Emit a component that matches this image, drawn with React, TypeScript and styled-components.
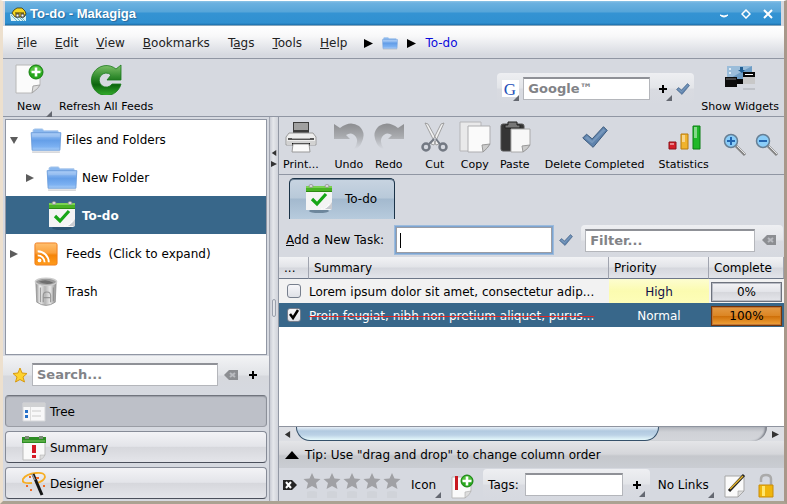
import React, { useState } from "react";
import styled, { createGlobalStyle, css } from "styled-components";

const Global = createGlobalStyle`
  * { box-sizing: border-box; }
  html, body { margin: 0; }
  body { font-family: "DejaVu Sans", sans-serif; font-size: 12px; line-height: 16px; color: #000; }
  button, input { font: inherit; color: inherit; }
  button { border: 0; padding: 0; margin: 0; background: none; }
  svg { display: block; flex: none; }
`;

const metal = "linear-gradient(#f3f3f6 0%, #e3e4e9 48%, #d6d7dc 50%, #e4e5ea 100%)";

/* ---------- window ---------- */
const Window = styled.div`
  display: flex; flex-direction: column; min-height: 100vh;
  background: #d6d9e0; border-top: 1px solid #fff;
  border-left: 3px solid #ede0ce; border-right: 3px solid #a8988a; border-bottom: 3px solid #aaa292;
`;
const TitleBar = styled.header`
  display: flex; align-items: center; height: 25px; padding: 0 2px 0 5px; margin: 0 3px 0 2px;
  background: linear-gradient(#8cc4e6 0, #6bb1e0 2px, #56a5d9 11px, #3493d3 12px, #3090d0 22px, #1d6fab 24px, #f0ddcc 25px);
  color: #fff;
`;
const Title = styled.h1`
  flex: 1; margin: 0 0 0 3px; font: bold 13px/20px "Liberation Sans", sans-serif; text-shadow: 1px 1px 1px #2a6a9c;
`;
const WinButton = styled.button` width: 22px; height: 20px; display: grid; place-items: center; `;
const MenuBar = styled.nav`
  display: flex; align-items: center; height: 33px; padding: 2px 5px 0; color: #222;
  background: linear-gradient(#fff 0, #f8f8f9 10px, #d6d9e0 29px); border-bottom: 1px solid #9096a3;
`;
const MenuButton = styled.button` padding: 0 9px; height: 22px; white-space: nowrap; `;
const Crumbs = styled.div` display: flex; align-items: center; gap: 9px; margin-left: 8px; `;
const CrumbLink = styled.a` color: #0a0adc; text-decoration: none; `;
const MainToolbar = styled.div`
  display: flex; align-items: center; gap: 3px; height: 58px; padding: 2px 1px 0 6px; border-bottom: 1px solid #9096a3;
`;
const Grow = styled.div` flex: 1; `;

const ToolButton = styled.button<{ $pad?: number }>`
  position: relative; display: flex; flex-direction: column; align-items: center; gap: 4px;
  padding: 0 ${(p) => p.$pad ?? 4}px; min-width: 40px; font-size: 11px; line-height: 16px; white-space: nowrap;
`;
const Corner = styled.span<{ $out?: boolean }>`
  position: absolute; right: ${(p) => (p.$out ? -3 : 0)}px; bottom: ${(p) => (p.$out ? -2 : 0)}px;
  border-style: solid; border-width: 0 0 6px 6px; border-color: transparent transparent #646871 transparent;
`;
const Capsule = styled.div<{ $gap?: number }>`
  display: flex; align-items: center; gap: ${(p) => p.$gap ?? 4}px; height: 31px; padding: 0 5px; border-radius: 4px;
  background: linear-gradient(#eeeff2 0%, #e3e5e9 48%, #d9dbe1 52%, #d6d9e0 100%);
`;
const SearchCapsule = styled(Capsule)` padding: 0 4px 0 5px; `;
const IconButton = styled.button<{ $w?: number }>`
  position: relative; width: ${(p) => p.$w ?? 20}px; height: 24px; display: grid; place-items: center; flex: none;
`;
const Field = styled.input<{ $w?: number; $focus?: boolean }>`
  height: 23px; min-width: 0; padding: 0 4px; border-radius: 0; background: #fff; outline: 0;
  border: 1px solid #b4b6bb; border-top: 2px solid #8f9197;
  ${(p) => (p.$w ? css`width: ${p.$w}px;` : css`flex: 1; width: 0;`)}
  &::placeholder { color: #828387; opacity: 1; font-weight: bold; font-size: 13px; }
  ${(p) => p.$focus && css`
    height: 26px; border: 1px solid #9a9da5; box-shadow: 0 0 0 1px #7da5d2, 0 0 0 2px #9dbbdc;
    &:placeholder-shown { caret-color: transparent; background: linear-gradient(#000, #000) 3px center / 1px 15px no-repeat #fff; }
  `}
`;

/* ---------- panes ---------- */
const Main = styled.main` flex: 1; display: flex; min-height: 0; `;
const Left = styled.aside` width: 267px; flex: none; display: flex; flex-direction: column; border-right: 1px solid #a2a6b1; `;
const Tree = styled.div` flex: 1; margin: 2px 2px 1px; background: #fff; border: 1px solid #9197a4; `;
const TreeRow = styled.button<{ $level: number; $on?: boolean }>`
  display: flex; align-items: center; width: 100%; height: 38px; text-align: left; white-space: pre;
  padding-top: 2px; padding-left: ${(p) => p.$level * 16}px; gap: 4px;
  ${(p) => p.$on && css`background: #38678a; color: #fff; font-weight: bold;`}
`;
const Twisty = styled.span` width: 16px; display: grid; place-items: center; `;
const TreeIcon = styled.span` width: 36px; display: grid; place-items: center; padding-left: 4px; `;
const SearchBar = styled.div`
  display: flex; align-items: center; height: 39px; padding: 0 7px 2px 4px;
  background: linear-gradient(#f2f3f5 0, #e1e3e7 19px, #d6d8dd 20px, #d6d9e0 100%);
`;
const SideButtons = styled.div` display: flex; flex-direction: column; gap: 4px; padding: 0 2px 2px; `;
const SideButton = styled.button<{ $on?: boolean }>`
  display: flex; align-items: center; gap: 4px; height: 32px; padding: 1px 0 0 16px; border-radius: 4px;
  border: 1px solid #868b97; border-bottom-color: #4b505c;
  background: ${(p) => (p.$on ? "#bdc0c8" : metal)};
  ${(p) => p.$on && css`border-color: #71757e #8c9099 #9a9da5; box-shadow: inset 0 1px 1px #989ca5;`}
`;
const Divider = styled.div`
  width: 9px; flex: none; display: flex; flex-direction: column; align-items: center; justify-content: space-between;
  padding-top: 33px; background: linear-gradient(90deg, #c9ccd4, #e5e7eb 40%, #d0d3da); border-right: 1px solid #9298a4;
`;
const Arrows = styled.div` display: flex; flex-direction: column; gap: 5px; `;
const Grip = styled.div` width: 4px; height: 18px; margin-bottom: 184px; border: 1px solid #9aa0ac; border-radius: 2px; `;

const Right = styled.section` flex: 1; min-width: 0; display: flex; flex-direction: column; `;
const Tools = styled.div` display: flex; gap: 6px; height: 58px; padding-top: 4px; border-bottom: 1px solid #9096a3; `;
const ToolGroup = styled.div` display: flex; `;
const ZoomButton = styled.button` width: 32px; height: 48px; display: grid; place-items: center; `;
const TabStrip = styled.div` height: 44px; padding: 3px 10px 0; `;
const Tab = styled.button`
  display: flex; align-items: center; gap: 12px; height: 41px; width: 106px; padding-left: 15px;
  border: 1px solid #1b3348; border-bottom: 0; border-radius: 5px 5px 0 0;
  background: linear-gradient(#c8d4e1 0, #b8c9d9 19px, #a3b9ce 20px, #b7cbdd 40px); box-shadow: inset 0 1px 0 #6b7f94;
`;
const TaskBar = styled.div` display: flex; align-items: center; height: 38px; padding: 4px 1px 0 7px; `;
const TaskLabel = styled.label` white-space: nowrap; margin-right: 12px; `;
const Push = styled.div` display: flex; align-items: center; flex: 1; min-width: 0; margin-left: 4px; gap: 5px; `;
const WideCapsule = styled(Capsule)` flex: 1; min-width: 0; padding: 0 4px; `;

const TableBox = styled.div` flex: 1; background: #fff; `;
const Table = styled.table` width: 100%; table-layout: fixed; border-collapse: separate; border-spacing: 0; `;
const Th = styled.th<{ $w?: number }>`
  height: 22px; padding: 0 5px; text-align: left; font-weight: normal; white-space: nowrap;
  ${(p) => p.$w && css`width: ${p.$w}px;`}
  background: linear-gradient(#f2f3f5 0, #e2e4e8 10px, #d5d7dd 11px, #e2e4ea 100%);
  border-right: 1px solid #a0a4af; border-bottom: 1px solid #6d7788;
`;
const Tr = styled.tr<{ $on?: boolean }>`
  height: 24px; background: ${(p) => (p.$on ? "#38678a" : "#f2f2f2")}; color: ${(p) => (p.$on ? "#fff" : "#000")};
`;
const Td = styled.td<{ $high?: boolean; $center?: boolean }>`
  padding: 1px 0 0; white-space: nowrap;
  ${(p) => p.$center && css`text-align: center;`}
  ${(p) => p.$high && css`background: linear-gradient(#fdfdd0, #fbfbb0 50%, #fdfdb8); color: #10104a;`}
`;
const TaskText = styled.div<{ $done?: boolean }>`
  overflow: hidden; text-overflow: ellipsis; white-space: nowrap;
  ${(p) => p.$done && css`text-decoration-line: line-through; text-decoration-color: #e02828; text-decoration-thickness: 1px;`}
`;
const CheckWrap = styled.label` position: relative; display: block; width: 15px; height: 15px; margin-left: 8px; `;
const Check = styled.input`
  appearance: none; display: block; width: 14px; height: 14px; margin: 0; border: 1px solid #777f8d; border-radius: 3px;
  background: linear-gradient(#f7f7fa, #dfe1e7);
`;
const Tick = styled.span` position: absolute; left: 1px; top: 0; pointer-events: none; `;
const Meter = styled.div<{ $full?: boolean }>`
  height: 20px; margin: 0 2px; display: grid; place-items: center; color: #000;
  border: 1px solid ${(p) => (p.$full ? "#74350a" : "#6e737e")}; box-shadow: inset 0 0 0 1px ${(p) => (p.$full ? "#c07738" : "#b9bcc5")};
  background: ${(p) => (p.$full ? "linear-gradient(#e39a45, #dc8624 48%, #cf7009 52%, #f0a33c)" : metal)};
`;
const Scroll = styled.div`
  display: flex; height: 15px; border-top: 1px solid #8f949f; background: #dddfe4;
`;
const ScrollEnd = styled.button` width: 17px; flex: none; display: grid; place-items: center; `;
const Track = styled.div`
  flex: 1; display: flex; background: linear-gradient(#b4b7be, #cfd1d6 5px, #d4d6db); border-radius: 0 0 14px 14px;
  box-shadow: inset -3px 0 2px -1px #7d818a;
`;
const Thumb = styled.div`
  width: 77%; border: 1px solid #35516b; border-top: 0; border-radius: 0 0 14px 14px;
  background: linear-gradient(#e7eff7 0, #b2cae0 4px, #bcd2e6 8px, #e6fafc 13px);
`;
const Tip = styled.div`
  display: flex; align-items: center; gap: 6px; height: 27px; padding-left: 6px;
  background: linear-gradient(#e4e5e8 0, #d5d6da 13px, #c5c7cc 15px, #cacdd3 100%);
`;
const Footer = styled.footer` display: flex; align-items: center; height: 33px; padding: 0 2px; `;
const Stars = styled.div` display: flex; margin: 0 4px 0 3px; `;
const TextButton = styled.button` position: relative; height: 26px; padding: 0 5px; white-space: nowrap; `;
const LinksButton = styled(TextButton)` margin-left: 3px; `;

/* ---------- drawings ---------- */
const Tri = ({ d, c = "#333", s = 8 }: { d: "l" | "r" | "u" | "d"; c?: string; s?: number }) => (
  <svg width={s} height={s} viewBox="0 0 8 8">
    <path fill={c} d={{ l: "M7 0L1 4l6 4z", r: "M0 0l8 4-8 4z", u: "M0 7l4-6 4 6z", d: "M0 1h8L4 8z" }[d]} />
  </svg>
);
const Folder = ({ w = 32 }: { w?: number }) => (
  <svg width={w} height={Math.round((w * 27) / 34)} viewBox="0 0 34 27">
    <defs><linearGradient id="fold" x2="0" y2="1"><stop stopColor="#a0c6f5" /><stop offset=".45" stopColor="#659fe8" /><stop offset=".8" stopColor="#7cb1f2" /><stop offset="1" stopColor="#a8cdf7" /></linearGradient></defs>
    <path d="M3 6V2l2-1h8l2 2h15v4z" fill="#8ab8ef" stroke="#aac7ea" />
    <path d="M1 5h32l-1 19H2z" fill="url(#fold)" stroke="#6f9fdb" />
    <path d="M2 6h30v4H2z" fill="#fff" opacity=".15" />
    <path d="M2 26h30" stroke="#b5b8bd" />
  </svg>
);
const TodoIcon = () => (
  <svg width="28" height="30" viewBox="0 0 28 30">
    <ellipse cx="14" cy="27" rx="10" ry="2" fill="#1d3b54" opacity=".45" />
    <path d="M1 2h26v23l-2 1H1z" fill="#f4f4f4" />
    <path d="M1 2h26v5H1z" fill="#49b324" /><path d="M1 2h26v2H1z" fill="#7bd152" />
    <path d="M1 7h26v1H1z" fill="#2c8a12" />
    <ellipse cx="6" cy="2" rx="2" ry="1.5" fill="#ddd" stroke="#888" strokeWidth=".7" />
    <ellipse cx="22" cy="2" rx="2" ry="1.5" fill="#ddd" stroke="#888" strokeWidth=".7" />
    <path d="M17 25q7-1 10-7v7z" fill="#c9cbd0" /><path d="M16 25q6 0 8-5" stroke="#fff" fill="none" />
    <path d="M7 15l5 5L21 10" fill="none" stroke="#16a616" strokeWidth="3.2" />
  </svg>
);
const Rss = () => (
  <svg width="24" height="26" viewBox="0 0 26 26">
    <defs><linearGradient id="rss" x2="0" y2="1"><stop stopColor="#ffc070" /><stop offset=".45" stopColor="#fba13c" /><stop offset=".55" stopColor="#f58408" /><stop offset="1" stopColor="#ff9c1c" /></linearGradient></defs>
    <rect x="1" y="1" width="24" height="24" rx="2" fill="url(#rss)" stroke="#ef7c1c" />
    <circle cx="6" cy="20" r="2" fill="#fff" />
    <path d="M4 14.500a7.500 7.500 0 0 1 7.500 7.500M4 10a12 12 0 0 1 12 12" fill="none" stroke="#fff" strokeWidth="2" />
  </svg>
);
const Trash = () => (
  <svg width="24" height="32" viewBox="0 0 26 32">
    <defs><linearGradient id="can"><stop stopColor="#8a8a8a" /><stop offset=".2" stopColor="#f2f2f2" /><stop offset=".45" stopColor="#b4b4b4" /><stop offset=".7" stopColor="#e8e8e8" /><stop offset="1" stopColor="#8c8c8c" /></linearGradient></defs>
    <path d="M2 5l1 22q10 7 20 0l1-22z" fill="url(#can)" stroke="#999" />
    <ellipse cx="13" cy="5" rx="11.500" ry="4" fill="#9b9b9b" stroke="#ccc" strokeWidth="1.500" />
    <path d="M5 5q8-4 16 1-8 3-16-1" fill="#6f6f6f" />
    <path d="M10 27v-7q0-4 4-4t4 4v7M10 22h8M7 11v16M21 11v15" fill="none" stroke="#8a8a8a" strokeWidth="1.300" opacity=".8" />
  </svg>
);
const Plus = ({ x, y, r = 7 }: { x: number; y: number; r?: number }) => (
  <g transform={`translate(${x} ${y})`}>
    <circle r={r} fill="#27a81c" stroke="#168010" /><path d={`M${-r + 1} 0a${r - 1} ${r - 1} 0 0 1 ${2 * r - 2} 0z`} fill="#73d458" opacity=".6" />
    <path d="M0-4.500v9M-4.500 0h9" stroke="#fff" strokeWidth="2.600" />
  </g>
);
const NewIcon = () => (
  <svg width="32" height="32" viewBox="0 0 32 32">
    <path d="M3 2h24v20l-8 8H3z" fill="#fbfbfb" stroke="#b8b8b8" />
    <path d="M27 22q-1 3-8 8l1-7z" fill="#ddd" stroke="#a5a5a5" /><Plus x={23} y={9} />
  </svg>
);
const Refresh = () => (
  <svg width="32" height="32" viewBox="0 0 32 32">
    <defs><linearGradient id="rf" x2="0" y2="1"><stop stopColor="#7ec069" /><stop offset=".4" stopColor="#2f8a2c" /><stop offset=".65" stopColor="#0d650e" /><stop offset="1" stopColor="#35ae2d" /></linearGradient></defs>
    <path d="M26 6l5-4v15H17l4-5A7 7 0 1 0 22 21h9A15 15 0 1 1 26 6z" fill="url(#rf)" stroke="#1b7a1c" strokeWidth=".8" />
  </svg>
);
const CheckIcon = ({ w = 26 }: { w?: number }) => (
  <svg width={w} height={w} viewBox="0 0 28 28">
    <path d="M1 15l4-4 6 5L23 3l4 4-15 18z" fill="#5e82ac" stroke="#38567a" strokeLinejoin="round" />
    <path d="M3 15l3-2 5 5L23 5l2 2-14 14z" fill="#8eabcb" opacity=".5" />
  </svg>
);
const Cross = () => (
  <svg width="10" height="10" viewBox="0 0 10 10"><path d="M5 1v8M1 5h8" stroke="#000" strokeWidth="2" /></svg>
);
const Clear = ({ dark }: { dark?: boolean }) => (
  <svg width="14" height="12" viewBox="0 0 14 12">
    <path d={dark ? "M0 1h9l5 5-5 5H0z" : "M14 1H5L0 6l5 5h9z"} fill={dark ? "#252525" : "#8c8e92"} />
    <path d={dark ? "M3 3l5 6M8 3l-5 6" : "M6 4l5 4M11 4L6 8"} stroke={dark ? "#fff" : "#b9bbc0"} strokeWidth="2" />
  </svg>
);
const Star = ({ gold }: { gold?: boolean }) => (
  <svg width={gold ? 16 : 20} height={gold ? 16 : 28} viewBox={gold ? "0 0 16 16" : "0 0 20 28"}>
    {gold ? <path d="M8 1l2 5 5 .5-4 3.500 1.500 5L8 12.500 3.500 15 5 10 1 6.500 6 6z" fill="#fdd22e" stroke="#d99a10" /> : (
      <><path d="M10 0l2.500 5.500 6 .5-4.500 4 1.500 6-5.500-3-5.500 3L6 10 1.500 6l6-.5z" fill="#a0a1a5" /><path d="M5 19q5-2 10 0v6H5z" fill="#cbced4" opacity=".6" /></>
    )}
  </svg>
);
const Widgets = () => (
  <svg width="32" height="32" viewBox="0 0 32 32">
    <path d="M3 3h25v16H3z" fill="#6e9dc5" /><path d="M3 3h25L3 17z" fill="#9bbdda" />
    <path d="M16 4h3v3h2l-3 3-4-3h2z" fill="#205d91" /><path d="M5 5h2v2H5zM5 9h2v2H5z" fill="#dceaf5" />
    <path d="M1 14h12v10H1z" fill="#0c0c0c" /><path d="M2 15h10v2H2z" fill="#444" />
    <path d="M19 10h12v11H19z" fill="#c8c8c8" /><path d="M19 9h12v5H19zM13 16h6v5h-6z" fill="#080808" /><path d="M21 11h8v1h-8z" fill="#fff" />
    <path d="M19 26h12" stroke="#bfc2c8" strokeWidth="2" />
  </svg>
);
const Print = () => (
  <svg width="32" height="32" viewBox="0 0 32 32">
    <path d="M8 1h16v13H8z" fill="#3c3c3c" /><path d="M9 2h14v7H9z" fill="#a0a0a0" />
    <path d="M4 12h24l3 4v8H1v-8z" fill="#ededed" stroke="#9b9b9b" /><path d="M3 17h26v2H3z" fill="#555" /><path d="M7 17h18v1H7z" fill="#aaa" />
    <path d="M2 20h28v4H2z" fill="#d2d2d2" /><path d="M7 22h18v3H7z" fill="#111" /><path d="M8 23h16l1 8H7z" fill="#fafafa" stroke="#999" />
  </svg>
);
const Undo = ({ id, flip }: { id: string; flip?: boolean }) => (
  <svg width="32" height="32" viewBox="0 0 32 32">
    <defs><linearGradient id={id} x2="0" y2="1"><stop stopColor="#8c8d90" /><stop offset=".5" stopColor="#a8aaae" /><stop offset="1" stopColor="#d6d9e0" /></linearGradient></defs>
    <path transform={flip ? "translate(32 0) scale(-1 1)" : undefined} fill={`url(#${id})`} d="M1 3l6 4Q17-1 26 5q8 7 2 18-3 5-7 5 5-7 2-12-4-6-10-2l4 4H1z" />
  </svg>
);
const Cut = () => (
  <svg width="32" height="32" viewBox="0 0 32 32">
    <path d="M6 2l3 1 11 20-3 1zM25 2l-3 1-10 20 3 1z" fill="#f1f1f1" stroke="#8e8e8e" strokeWidth=".8" />
    <ellipse cx="7" cy="26" rx="3.500" ry="3.500" fill="none" stroke="#737983" strokeWidth="2.500" /><ellipse cx="24" cy="26" rx="3.500" ry="3.500" fill="none" stroke="#737983" strokeWidth="2.500" />
    <path d="M10 23l5-5M21 23l-4-5" stroke="#737983" strokeWidth="2" />
  </svg>
);
const Copy = () => (
  <svg width="32" height="32" viewBox="0 0 32 32">
    <path d="M1 1h21v29H1z" fill="#e9e9ea" stroke="#b5b5b8" /><path d="M9 5h22v18l-7 8H9z" fill="#fafafa" stroke="#adadb0" />
    <path d="M31 23q-2 4-7 8l-1-7z" fill="#ccc" stroke="#999" />
  </svg>
);
const Paste = () => (
  <svg width="32" height="32" viewBox="0 0 32 32">
    <rect x="2" y="3" width="23" height="27" rx="2" fill="#353535" stroke="#555" /><path d="M9 1h9v3h3v3H6V4h3z" fill="#777" stroke="#222" />
    <path d="M12 8h19v16l-7 7H12z" fill="#f8f8f8" stroke="#aaa" /><path d="M31 24q-2 4-7 7l-1-6z" fill="#ccc" stroke="#999" />
  </svg>
);
const Stats = () => (
  <svg width="34" height="32" viewBox="0 0 34 32">
    <path d="M2 21h7v7H2z" fill="#d51e28" stroke="#8c1018" /><path d="M14 13h7v15h-7z" fill="#f0b32c" stroke="#b87a0c" /><path d="M26 5h7v23h-7z" fill="#20b829" stroke="#087e12" />
    <path d="M3 22h4v2H3zM15 14h3v7h-3zM27 6h3v11h-3z" fill="#fff" opacity=".45" />
  </svg>
);
const Zoom = ({ plus }: { plus?: boolean }) => (
  <svg width="24" height="24" viewBox="0 0 24 24">
    <path d="M13 13l9 9" stroke="#858585" strokeWidth="3" /><path d="M14 13l8 8" stroke="#e6e6e6" />
    <circle cx="8" cy="8" r="6.500" fill="#8bcdf8" stroke="#677f94" strokeWidth="1.500" />
    <path d={plus ? "M8 4v8M4 8h8" : "M4 8h8"} stroke="#2466b0" strokeWidth="2" />
  </svg>
);
const TreeGlyph = () => (
  <svg width="24" height="20" viewBox="0 0 24 20">
    <path d="M1 1h22v18H1z" fill="#f8f8f9" stroke="#d6d7da" /><path d="M1 1h22v4H1z" fill="#d0d1d3" /><path d="M8 5h1v14H8z" fill="#ddd" />
    <path d="M3 8h3v3H3zM3 13h3v3H3z" fill="#2670c9" /><path d="M10 9h9M10 14h9" stroke="#ccc" />
  </svg>
);
const SummaryGlyph = () => (
  <svg width="24" height="26" viewBox="0 0 24 26">
    <path d="M1 3h22v17l-5 5H1z" fill="#f9f9f9" stroke="#bbb" /><path d="M0 2h24v6H0z" fill="#2d8c24" /><path d="M1 5h22v2H1z" fill="#57ad43" />
    <path d="M3 1h4v3H3zM17 1h4v3h-4z" fill="#7b8b78" /><path d="M10 10h4v8h-4zM10 20h4v3h-4z" fill="#d51a25" /><path d="M23 20q-1 3-5 5v-5z" fill="#ddd" stroke="#aaa" strokeWidth=".5" />
  </svg>
);
const Wand = () => (
  <svg width="24" height="26" viewBox="0 0 24 26">
    <path d="M10 12q-11 1-9-4Q4 3 14 2q9-1 9 4-1 4-8 6" fill="none" stroke="#f6ae24" strokeWidth="1.800" />
    <path d="M11 3l9 21" stroke="#161616" strokeWidth="3" /><path d="M10 3l3 6" stroke="#999" strokeWidth="1.500" />
    <path d="M7 5h2v2H7zM4 14h2v2H4zM21 14h2v2h-2zM8 18h2v2H8zM14 6h3v2h-3z" fill="#f06a24" />
  </svg>
);
const AppIcon = () => (
  <svg width="17" height="16" viewBox="0 0 17 16">
    <path d="M0 8l16 2v5H1z" fill="#d9f2f7" /><path d="M1 9l6 6M4 9l6 6M8 10l5 5M11 11l4 4" stroke="#58a8ba" strokeWidth=".8" />
    <path d="M2 7l2-3 3-2h5l3 3 1 3-2 3H5z" fill="#f5d721" stroke="#3a330f" strokeWidth=".8" /><path d="M5 7h9" stroke="#3a330f" />
    <path d="M6 8h3v3H6zM11 8h3v3h-3z" fill="#fff" stroke="#222" strokeWidth=".8" />
  </svg>
);
const GoogleG = () => (
  <svg width="17" height="20" viewBox="0 0 17 20" overflow="visible">
    <path d="M0 1h17v17H0z" fill="#fff" />
    <text x="8" y="16" textAnchor="middle" fontFamily="Liberation Serif, serif" fontSize="17" fill="#2450b8">G</text>
  </svg>
);
const NoteAdd = () => (
  <svg width="24" height="26" viewBox="0 0 24 26">
    <path d="M2 4h19v14l-6 7H2z" fill="#fafafa" stroke="#bbb" /><path d="M5 3h3v14H5z" fill="#c81820" /><path d="M21 18q-1 4-6 7v-6z" fill="#ddd" stroke="#aaa" strokeWidth=".6" /><Plus x={17} y={8} r={6} />
  </svg>
);
const Edit = () => (
  <svg width="22" height="26" viewBox="0 0 22 26">
    <path d="M1 3h19v15l-6 6H1z" fill="#fafafa" stroke="#a7a7a7" /><path d="M20 18l-6 6v-6z" fill="#ddd" stroke="#999" strokeWidth=".6" />
    <path d="M5 18L20 2" stroke="#222" strokeWidth="3" /><path d="M6 16L19 3" stroke="#e6b52c" strokeWidth="1.500" />
  </svg>
);
const Lock = () => (
  <svg width="18" height="26" viewBox="0 0 18 26">
    <path d="M4 9V6q0-4 5-4t5 4v7" fill="none" stroke="#aaa" strokeWidth="2.500" />
    <path d="M2 12h14v12H2z" fill="#f0b50c" stroke="#c98c08" /><path d="M5 13h3v10H5z" fill="#ffe66e" />
  </svg>
);

/* ---------- data ---------- */
const menus: [string, string, string][] = [
  ["", "F", "ile"], ["", "E", "dit"], ["", "V", "iew"], ["", "B", "ookmarks"], ["T", "a", "gs"], ["", "T", "ools"], ["", "H", "elp"],
];
const nodes = [
  { name: "Files and Folders", level: 0, tw: "d" as const, icon: <Folder /> },
  { name: "New Folder", level: 1, tw: "r" as const, icon: <Folder /> },
  { name: "To-do", level: 1, icon: <TodoIcon /> },
  { name: "Feeds  (Click to expand)", level: 0, tw: "r" as const, icon: <Rss /> },
  { name: "Trash", level: 0, icon: <Trash /> },
];
const views = [
  { name: "Tree", icon: <TreeGlyph /> },
  { name: "Summary", icon: <SummaryGlyph /> },
  { name: "Designer", icon: <Wand /> },
];
const toolGroups = [
  [{ name: "Print...", icon: <Print /> }],
  [{ name: "Undo", icon: <Undo id="un" /> }, { name: "Redo", icon: <Undo id="re" flip /> }],
  [{ name: "Cut", icon: <Cut /> }, { name: "Copy", icon: <Copy /> }, { name: "Paste", icon: <Paste /> }],
  [{ name: "Delete Completed", icon: <svg width="32" height="32" viewBox="-3 -3 34 34"><CheckIcon w={28} /></svg> }],
  [{ name: "Statistics", icon: <Stats /> }],
];
const tasks = [
  { text: "Lorem ipsum dolor sit amet, consectetur adip...", pri: "High" },
  { text: "Proin feugiat, nibh non pretium aliquet, purus...", pri: "Normal" },
];

export default function App() {
  const [node, setNode] = useState("To-do");
  const [view, setView] = useState("Tree");
  const [done, setDone] = useState([false, true]);
  return (
    <>
      <Global />
      <Window>
        <TitleBar>
          <AppIcon /><Title>To-do - Makagiga</Title>
          <WinButton aria-label="Minimize"><svg width="10" height="10"><path d="M1 6q4 4 8 0-4 2-8 0" fill="#fff" stroke="#fff" /></svg></WinButton>
          <WinButton aria-label="Maximize"><svg width="10" height="10"><path d="M5 1l4 4-4 4-4-4z" fill="none" stroke="#fff" strokeWidth="1.500" /></svg></WinButton>
          <WinButton aria-label="Close"><svg width="10" height="10"><path d="M1 1l8 8M9 1L1 9" stroke="#fff" strokeWidth="2" /></svg></WinButton>
        </TitleBar>
        <MenuBar>
          {menus.map(([a, u, b]) => <MenuButton key={a + u + b}>{a}<u>{u}</u>{b}</MenuButton>)}
          <Crumbs><Tri d="r" c="#000" s={9} /><Folder w={16} /><Tri d="r" c="#000" s={9} /><CrumbLink href="#todo">To-do</CrumbLink></Crumbs>
        </MenuBar>
        <MainToolbar>
          <ToolButton><NewIcon />New<Corner $out /></ToolButton>
          <ToolButton $pad={7}><Refresh />Refresh All Feeds</ToolButton>
          <Grow />
          <SearchCapsule>
            <IconButton $w={17} aria-label="Search engine"><GoogleG /><Corner /></IconButton>
            <Field $w={127} placeholder="Google™" aria-label="Web search" />
            <IconButton $w={18} aria-label="Add search"><Cross /><Corner /></IconButton>
            <IconButton $w={14} aria-label="Go"><CheckIcon w={14} /></IconButton>
          </SearchCapsule>
          <ToolButton><Widgets />Show Widgets</ToolButton>
        </MainToolbar>
        <Main>
          <Left>
            <Tree role="tree">
              {nodes.map((n) => (
                <TreeRow key={n.name} role="treeitem" aria-selected={node === n.name} $level={n.level} $on={node === n.name} onClick={() => setNode(n.name)}>
                  <Twisty>{n.tw && <Tri d={n.tw} c="#5c5c5c" />}</Twisty><TreeIcon>{n.icon}</TreeIcon>{n.name}
                </TreeRow>
              ))}
            </Tree>
            <SearchBar>
              <IconButton $w={25} aria-label="Bookmark search"><Star gold /></IconButton>
              <Field placeholder="Search..." aria-label="Search" />
              <IconButton $w={26} aria-label="Clear search"><Clear /></IconButton>
              <IconButton $w={18} aria-label="Add"><Cross /></IconButton>
            </SearchBar>
            <SideButtons>
              {views.map((v) => <SideButton key={v.name} $on={view === v.name} onClick={() => setView(v.name)}>{v.icon}{v.name}</SideButton>)}
            </SideButtons>
          </Left>
          <Divider><Arrows><Tri d="l" s={6} /><Tri d="r" s={6} /></Arrows><Grip /></Divider>
          <Right>
            <Tools>
              {toolGroups.map((g, i) => <ToolGroup key={i}>{g.map((t) => <ToolButton key={t.name}>{t.icon}{t.name}</ToolButton>)}</ToolGroup>)}
              <ToolGroup><ZoomButton aria-label="Zoom in"><Zoom plus /></ZoomButton><ZoomButton aria-label="Zoom out"><Zoom /></ZoomButton></ToolGroup>
            </Tools>
            <TabStrip role="tablist"><Tab role="tab" aria-selected><TodoIcon />To-do</Tab></TabStrip>
            <TaskBar>
              <TaskLabel htmlFor="task"><u>A</u>dd a New Task:</TaskLabel>
              <Field id="task" $w={156} $focus autoFocus placeholder=" " />
              <Push>
                <IconButton $w={20} aria-label="Add task"><CheckIcon w={14} /></IconButton>
                <WideCapsule>
                  <Field placeholder="Filter..." aria-label="Filter" />
                  <IconButton $w={20} aria-label="Clear filter"><Clear /></IconButton>
                </WideCapsule>
              </Push>
            </TaskBar>
            <TableBox>
              <Table>
                <thead><tr><Th $w={30}>...</Th><Th>Summary</Th><Th $w={100}>Priority</Th><Th $w={75}>Complete</Th></tr></thead>
                <tbody>
                  {tasks.map((t, i) => (
                    <Tr key={t.pri} $on={done[i]}>
                      <Td><CheckWrap>
                        <Check type="checkbox" aria-label={t.text} checked={done[i]} onChange={() => setDone(done.map((d, j) => (j === i ? !d : d)))} />
                        {done[i] && <Tick><svg width="12" height="13" viewBox="0 0 12 13"><path d="M2 6l3 4 5-8" fill="none" stroke="#000" strokeWidth="2.500" /></svg></Tick>}
                      </CheckWrap></Td>
                      <Td><TaskText $done={done[i]}>{t.text}</TaskText></Td>
                      <Td $center $high={t.pri === "High"}>{t.pri}</Td>
                      <Td><Meter role="progressbar" aria-valuenow={done[i] ? 100 : 0} $full={done[i]}>{done[i] ? "100%" : "0%"}</Meter></Td>
                    </Tr>
                  ))}
                </tbody>
              </Table>
            </TableBox>
            <Scroll>
              <ScrollEnd aria-label="Scroll left"><Tri d="l" s={7} /></ScrollEnd><Track><Thumb /></Track><ScrollEnd aria-label="Scroll right"><Tri d="r" s={7} /></ScrollEnd>
            </Scroll>
            <Tip><svg width="14" height="8"><path d="M0 8l7-8 7 8z" /></svg>Tip: Use "drag and drop" to change column order</Tip>
            <Footer>
              <IconButton $w={18} aria-label="Clear rating"><Clear dark /></IconButton>
              <Stars>{[1, 2, 3, 4, 5].map((n) => <IconButton key={n} $w={20} aria-label={`Rate ${n}`}><Star /></IconButton>)}</Stars>
              <TextButton>Icon<Corner /></TextButton>
              <IconButton $w={42} aria-label="Add note"><NoteAdd /></IconButton>
              <Capsule as="label" $gap={6}>Tags:<Field $w={98} aria-label="Tags" /><IconButton $w={16} aria-label="Add tag"><Cross /><Corner /></IconButton></Capsule>
              <LinksButton>No Links<Corner /></LinksButton>
              <Grow />
              <IconButton $w={30} aria-label="Edit"><Edit /></IconButton>
              <IconButton $w={32} aria-label="Unlock"><Lock /></IconButton>
            </Footer>
          </Right>
        </Main>
      </Window>
    </>
  );
}
